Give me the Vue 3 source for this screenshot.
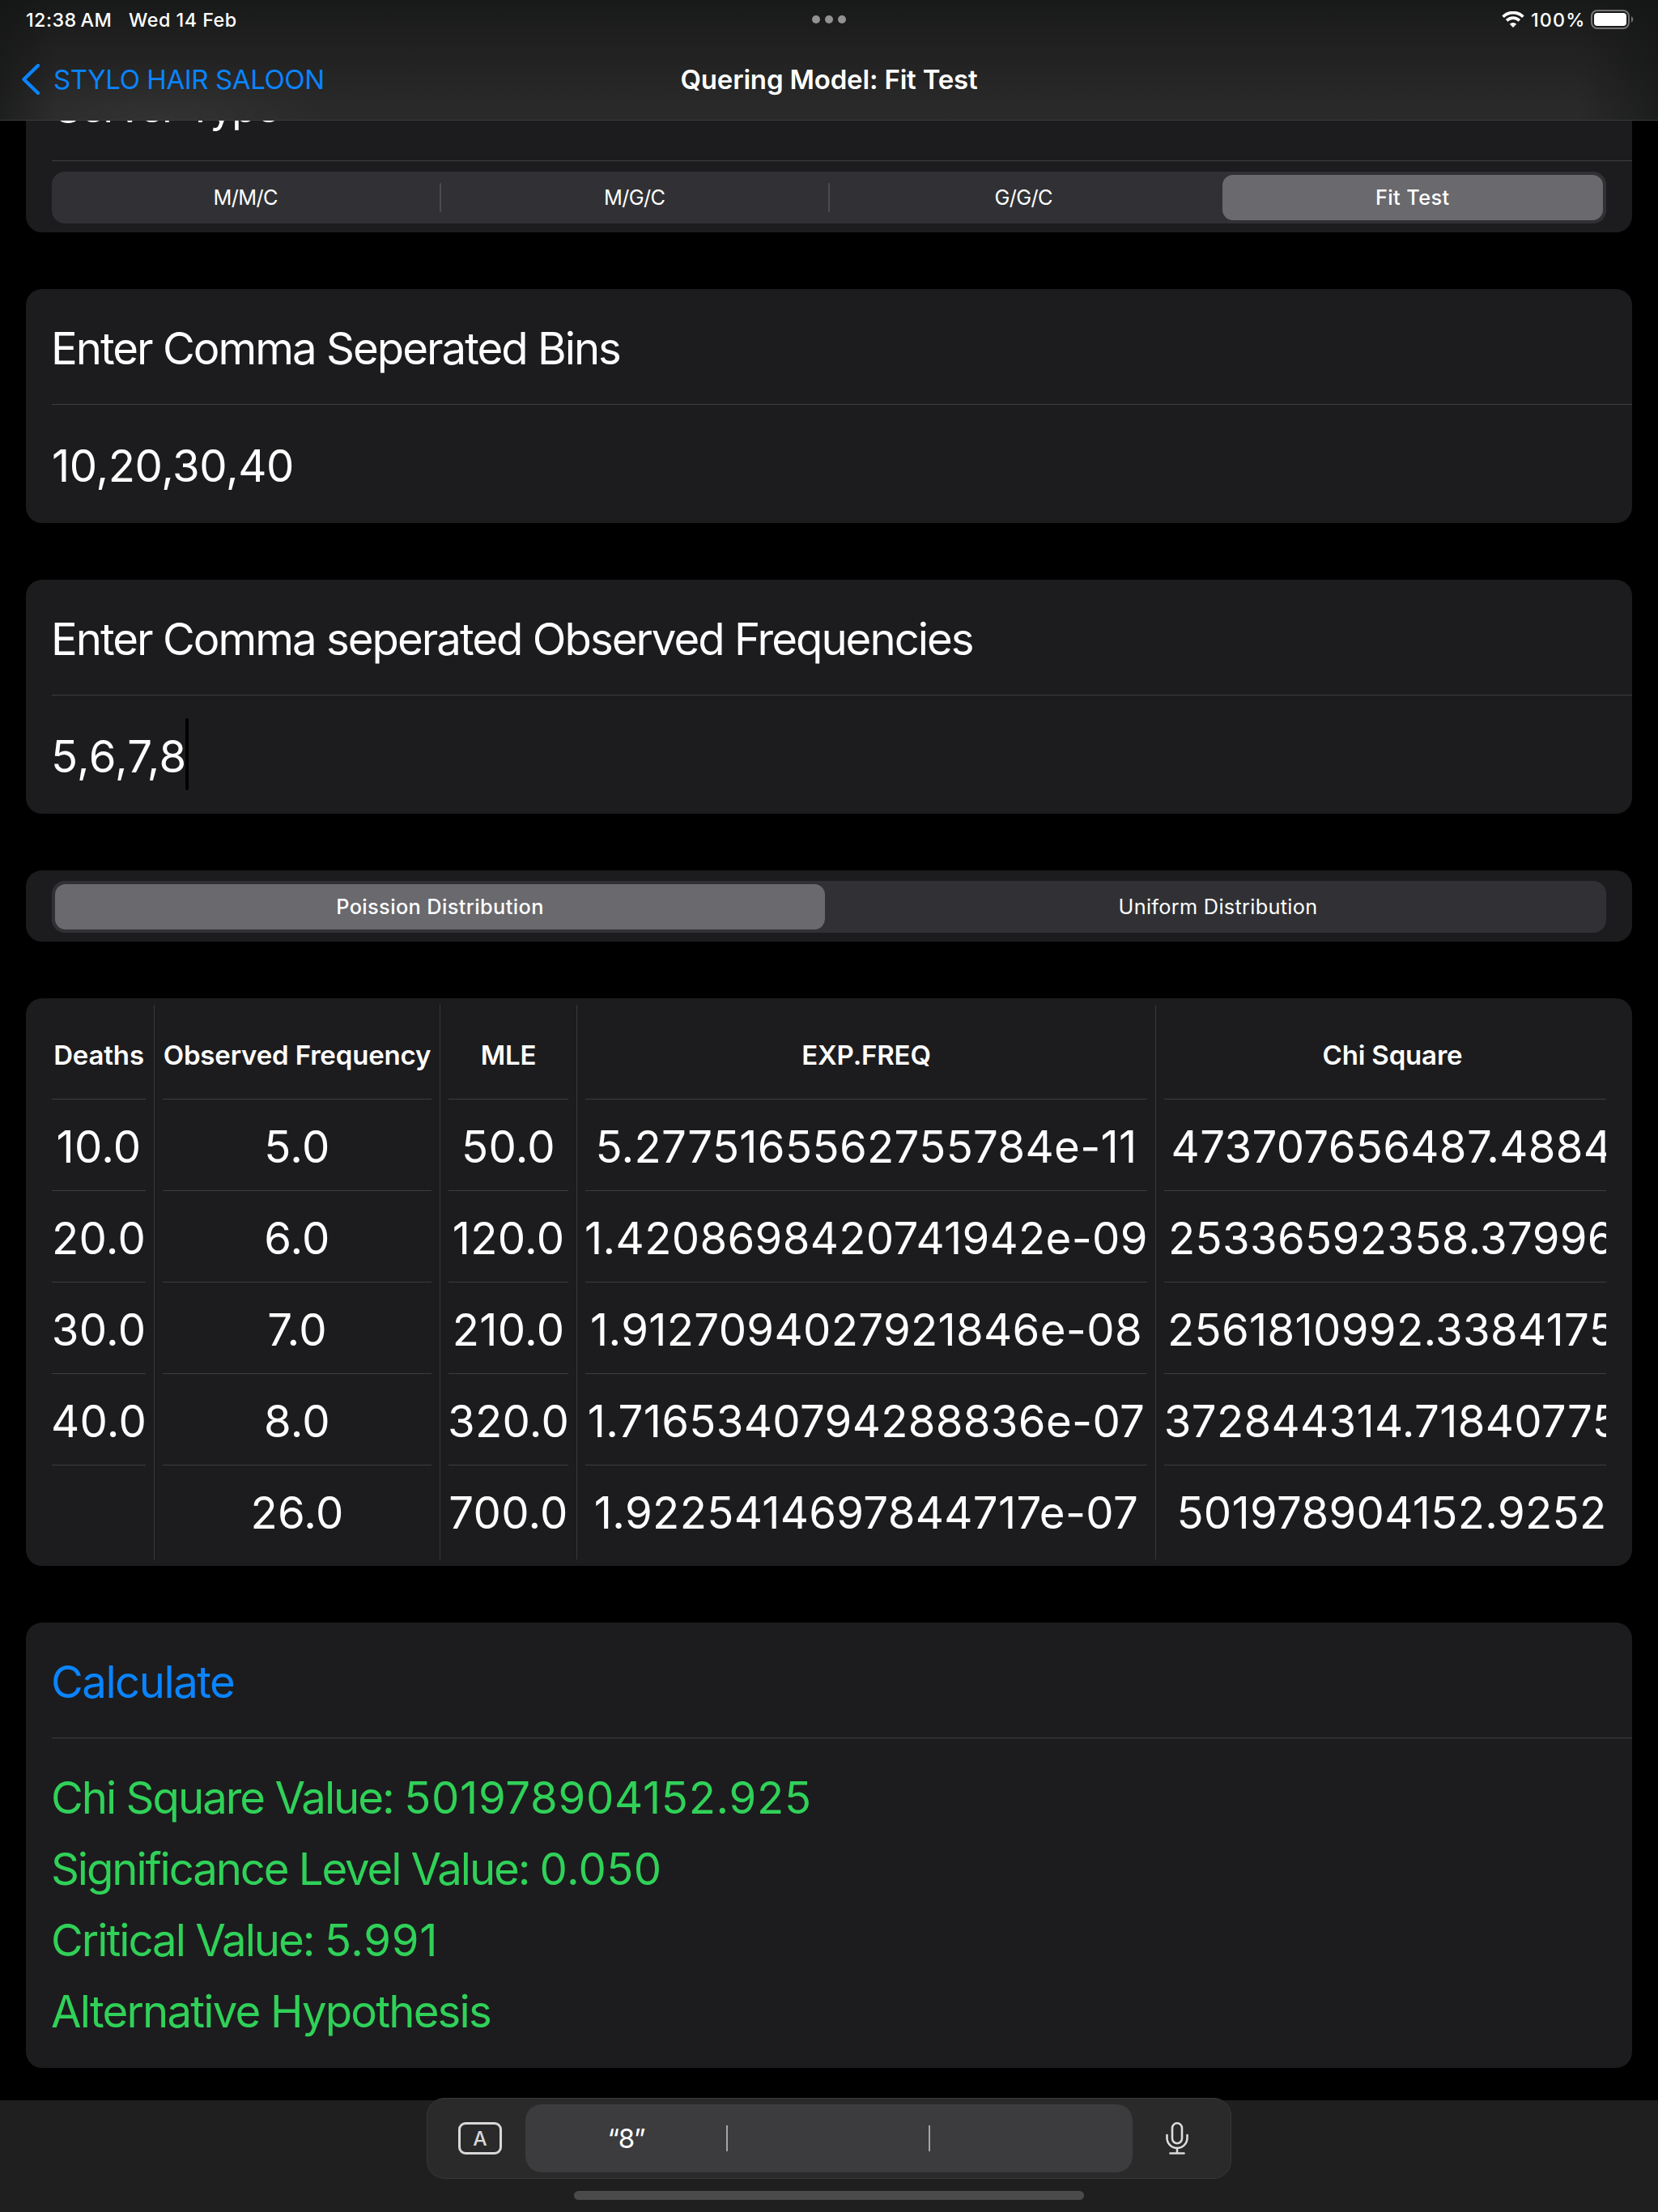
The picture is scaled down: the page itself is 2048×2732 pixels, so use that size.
<script setup>
const serverTypes = ['M/M/C', 'M/G/C', 'G/G/C', 'Fit Test']
const selectedServer = 3

const distributions = ['Poission Distribution', 'Uniform Distribution']
const selectedDistribution = 0

const columns = [
  { key: 'deaths', title: 'Deaths', cells: ['10.0', '20.0', '30.0', '40.0', ''] },
  { key: 'observed', title: 'Observed Frequency', cells: ['5.0', '6.0', '7.0', '8.0', '26.0'] },
  { key: 'mle', title: 'MLE', cells: ['50.0', '120.0', '210.0', '320.0', '700.0'] },
  {
    key: 'expected',
    title: 'EXP.FREQ',
    cells: [
      '5.2775165562755784e-11',
      '1.4208698420741942e-09',
      '1.9127094027921846e-08',
      '1.7165340794288836e-07',
      '1.9225414697844717e-07',
    ],
  },
  {
    key: 'chi',
    title: 'Chi Square',
    cells: [
      '473707656487.4884',
      '25336592358.37996',
      '2561810992.3384175',
      '372844314.71840775',
      '501978904152.9252',
    ],
  },
]

const results = [
  { key: 'chi-value', label: 'Chi Square Value: ', value: '501978904152.925' },
  { key: 'significance', label: 'Significance Level Value: ', value: '0.050' },
  { key: 'critical', label: 'Critical Value: ', value: '5.991' },
  { key: 'hypothesis', label: 'Alternative Hypothesis', value: '' },
]
</script>

<template>
  <div class="screen">
    <header class="topbar">
      <div class="status">
        <span class="clock">12:38<i class="thin"></i>AM</span>
        <span class="date">Wed 14 Feb</span>
        <div class="dots"><i></i><i></i><i></i></div>
        <svg class="wifi" viewBox="0 0 28 20" width="28" height="20">
          <path d="M1.6 6.700A17.5 17.5 0 0 1 26.4 6.700" fill="none" stroke="#fff" stroke-width="3.7" />
          <path d="M6.1 11.4A11.2 11.2 0 0 1 21.9 11.4" fill="none" stroke="#fff" stroke-width="3.6" />
          <path d="M14 20L9.800 15.800A5.900 5.900 0 0 1 18.200 15.800Z" fill="#fff" />
        </svg>
        <span class="percent">100%</span>
        <svg class="battery" viewBox="0 0 54 24" width="54" height="24">
          <rect x="1" y="1" width="46" height="22" rx="7" fill="none" stroke="#737473" stroke-width="2" />
          <rect x="4" y="4" width="40" height="16" rx="4" fill="#fff" />
          <path d="M50 8A4.600 4.600 0 0 1 50 16Z" fill="#737473" />
        </svg>
      </div>
      <div class="nav">
        <div class="back">
          <svg class="chevron" viewBox="0 0 22 38" width="22" height="38">
            <path d="M20 2L2.500 19L20 36" fill="none" stroke="#0a84ff" stroke-width="4.400" stroke-linecap="round" stroke-linejoin="round" />
          </svg>
          <span>STYLO HAIR SALOON</span>
        </div>
        <h1>Quering Model: Fit Test</h1>
      </div>
    </header>

    <main class="form">
      <section class="card">
        <div class="row server">Server Type</div>
        <div class="picker ruled">
          <div class="track">
            <div
              v-for="(name, i) in serverTypes"
              :key="name"
              class="segment"
              :class="{ on: i === selectedServer, line: i < selectedServer - 1 }"
            ><span>{{ name }}</span></div>
          </div>
        </div>
      </section>

      <section class="card">
        <div class="row">Enter Comma Seperated Bins</div>
        <div class="row field bins">10,20,30,40</div>
      </section>

      <section class="card">
        <div class="row">Enter Comma seperated Observed Frequencies</div>
        <div class="row field">5,6,7,8<i class="caret"></i></div>
      </section>

      <section class="card">
        <div class="picker">
          <div class="track halves">
            <div
              v-for="(name, i) in distributions"
              :key="name"
              class="segment"
              :class="{ on: i === selectedDistribution }"
            ><span>{{ name }}</span></div>
          </div>
        </div>
      </section>

      <section class="card table">
        <div v-for="c in columns" :key="c.key" class="column" :class="c.key">
          <div class="head">{{ c.title }}</div>
          <div v-for="(v, i) in c.cells" :key="i" class="cell"><span>{{ v }}</span></div>
        </div>
      </section>

      <section class="card">
        <div class="row action">Calculate</div>
        <div class="results">
          <div v-for="r in results" :key="r.key" class="result" :class="r.key">{{ r.label }}<span class="num">{{ r.value }}</span></div>
        </div>
      </section>
    </main>

    <footer class="dock">
      <div class="bar">
        <div class="key">A</div>
        <div class="suggestions">
          <span>“8”</span>
          <span></span>
          <span></span>
        </div>
        <svg class="mic" viewBox="0 0 28 40" width="28" height="40">
          <g fill="none" stroke="#dcdcdc" stroke-width="2.600" stroke-linecap="round">
            <rect x="8" y="1.300" width="12" height="25" rx="6" />
            <path d="M1.500 16V19.500A12.500 12.500 0 0 0 26.500 19.500V16" />
            <path d="M14 32V38.500M5.500 38.500H22.500" />
          </g>
        </svg>
      </div>
      <div class="home"></div>
    </footer>
  </div>
</template>

<style>
body {
  margin: 0;
  background: #000;
}
</style>

<style scoped>
.screen {
  position: relative;
  box-sizing: border-box;
  width: 2048px;
  height: 2732px;
  overflow: hidden;
  background: #000;
  color: #fff;
  font-family: Inter, 'Liberation Sans', sans-serif;
  font-size: 54.5px;
}

/* Translucent header over the scrolled form */
.topbar {
  position: absolute;
  z-index: 2;
  top: 0;
  left: 0;
  box-sizing: border-box;
  width: 2048px;
  height: 149px;
  border-bottom: 1px solid #3b3b3b;
  background:
    radial-gradient(ellipse 210px 80px at 200px 149px, rgba(255, 255, 255, 0.04), transparent),
    linear-gradient(90deg, rgba(18, 20, 19, 0.55), transparent 70px, transparent 1950px, rgba(18, 20, 19, 0.6)),
    linear-gradient(#181a19, #1e1f1e 45px, #222322 80px, #292929 130px, #2a2a2a);
}
.status {
  position: relative;
  display: flex;
  align-items: center;
  height: 48px;
  padding: 0 30px 0 32px;
  font-size: 23.3px;
  font-weight: 500;
}
.clock {
  width: 127px;
  letter-spacing: 0.45px;
}
.thin {
  display: inline-block;
  width: 5px;
}
.date {
  letter-spacing: 0.5px;
}
.dots {
  position: absolute;
  left: 1003px;
  top: 19px;
  display: flex;
  gap: 6px;
}
.dots i {
  width: 10px;
  height: 10px;
  border-radius: 50%;
  background: #919291;
}
.wifi {
  margin-left: auto;
}
.percent {
  width: 74px;
  margin-left: 8px;
  letter-spacing: 1.2px;
}
.battery {
  margin-right: -1px;
}
.nav {
  position: relative;
  display: flex;
  align-items: center;
  height: 100px;
  font-size: 33px;
}
.back {
  display: flex;
  align-items: center;
  gap: 17px;
  padding-left: 27px;
  color: #0a84ff;
  letter-spacing: -0.4px;
}
.nav h1 {
  position: absolute;
  left: 0;
  right: 0;
  margin: 0;
  text-align: center;
  font-size: 33px;
  font-weight: 600;
  letter-spacing: -0.17px;
}

.form {
  display: flex;
  flex-direction: column;
  gap: 70px;
  padding: 56px 32px 0;
}
.card {
  border-radius: 20px;
  overflow: hidden;
  background: #1c1c1e;
}
.row {
  box-sizing: border-box;
  height: 142px;
  padding: 4px 0 0 31px;
  line-height: 139px;
  white-space: nowrap;
  letter-spacing: -1.98px;
}
.server {
  padding: 7px 0 0 36px;
  font-size: 51px;
  letter-spacing: -1.5px;
}
.field,
.results,
.ruled {
  background: linear-gradient(#3d3d40, #3d3d40) 32px 0 / 100% 1px no-repeat;
}
.field {
  display: flex;
  align-items: center;
  height: 147px;
  padding: 5px 0 0 31px;
  line-height: 88px;
  letter-spacing: 0.35px;
}
.bins {
  padding-left: 32px;
  letter-spacing: -0.39px;
}
.caret {
  width: 4px;
  height: 89px;
  margin: -5px 0 0 -2px;
  border-radius: 2px;
  background: #000;
}
.action {
  color: #0a84ff;
  letter-spacing: -1.5px;
}
.results {
  padding: 30px 31px 26px;
  color: #30d158;
}
.result {
  height: 88px;
  line-height: 89px;
  white-space: pre;
  letter-spacing: -2px;
}
.significance {
  letter-spacing: -2.1px;
}
.hypothesis {
  letter-spacing: -1.8px;
}
.num {
  letter-spacing: 0.7px;
}
.significance .num {
  letter-spacing: 0.35px;
}

.picker {
  padding: 13px 32px 11px;
}
.ruled {
  padding-top: 14px;
}
.track {
  display: flex;
  box-sizing: border-box;
  height: 64px;
  border-radius: 16px;
  background: #313135;
  font-size: 25.3px;
  letter-spacing: 0.3px;
}
.segment {
  position: relative;
  flex: 1;
  display: flex;
  padding: 4px;
}
.segment span {
  flex: 1;
  display: flex;
  align-items: center;
  justify-content: center;
  padding-bottom: 1px;
  border-radius: 13px;
}
.halves .segment.on {
  padding-right: 6px;
}
.ruled .segment:not(.on) {
  padding-right: 6px;
  letter-spacing: -0.6px;
}
.segment.on span {
  background: #69696e;
  font-weight: 500;
  letter-spacing: 0.4px;
}
.segment.line::after {
  content: '';
  position: absolute;
  right: 0;
  top: 14px;
  width: 2px;
  height: 36px;
  border-radius: 1px;
  background: #4b4b50;
}

.table {
  display: flex;
  padding: 8px 32px;
}
.column {
  flex: none;
  position: relative;
  box-sizing: border-box;
}
.column + .column {
  padding-left: 10px;
  border-left: 1px solid #38383b;
}
.deaths {
  width: 126px;
}
.observed {
  width: 353px;
}
.mle {
  width: 169px;
}
.expected {
  width: 715px;
}
.column.chi {
  width: 557px;
  overflow: hidden;
}
.column:not(.chi) {
  padding-right: 10px;
}
.head {
  box-sizing: border-box;
  height: 116px;
  padding-top: 8px;
  line-height: 108px;
  text-align: center;
  font-size: 33px;
  font-weight: 600;
  letter-spacing: -0.16px;
  white-space: nowrap;
}
.cell {
  display: flex;
  justify-content: center;
  box-sizing: border-box;
  height: 113px;
  padding-top: 2px;
  border-top: 1px solid #3d3d40;
  line-height: 112px;
  white-space: nowrap;
  letter-spacing: 0.32px;
}
.cell:last-child {
  height: 117px;
}
.chi .head {
  width: 564px;
}
.chi .cell {
  width: 562px;
}

.dock {
  position: absolute;
  left: 0;
  right: 0;
  bottom: 0;
  display: flex;
  flex-direction: column;
  align-items: center;
  height: 138px;
  background: #1f1f1f;
}
.bar {
  display: flex;
  align-items: center;
  box-sizing: border-box;
  width: 994px;
  height: 100px;
  margin-top: -3px;
  padding-left: 38px;
  border: 1px solid #373737;
  border-radius: 22px;
  background: #2a2a2a;
}
.key {
  box-sizing: border-box;
  width: 54px;
  height: 40px;
  margin-right: 29px;
  border: 3px solid #d8d8d8;
  border-radius: 9px;
  color: #d8d8d8;
  text-align: center;
  font-size: 24.5px;
  font-weight: 500;
  line-height: 35px;
}
.suggestions {
  display: flex;
  align-items: center;
  box-sizing: border-box;
  width: 750px;
  height: 84px;
  border-radius: 20px;
  background: #3c3c3e;
  font-size: 33px;
  letter-spacing: -1.2px;
}
.suggestions span {
  flex: 1;
  height: 32px;
  line-height: 32px;
  text-align: center;
}
.suggestions span + span {
  position: relative;
  left: -1px;
  box-sizing: border-box;
  border-left: 2px solid #a5a5a7;
}
.mic {
  margin-left: 41px;
}
.home {
  width: 630px;
  height: 11px;
  margin-top: 15px;
  border-radius: 6px;
  background: #4a4a4a;
}
</style>
